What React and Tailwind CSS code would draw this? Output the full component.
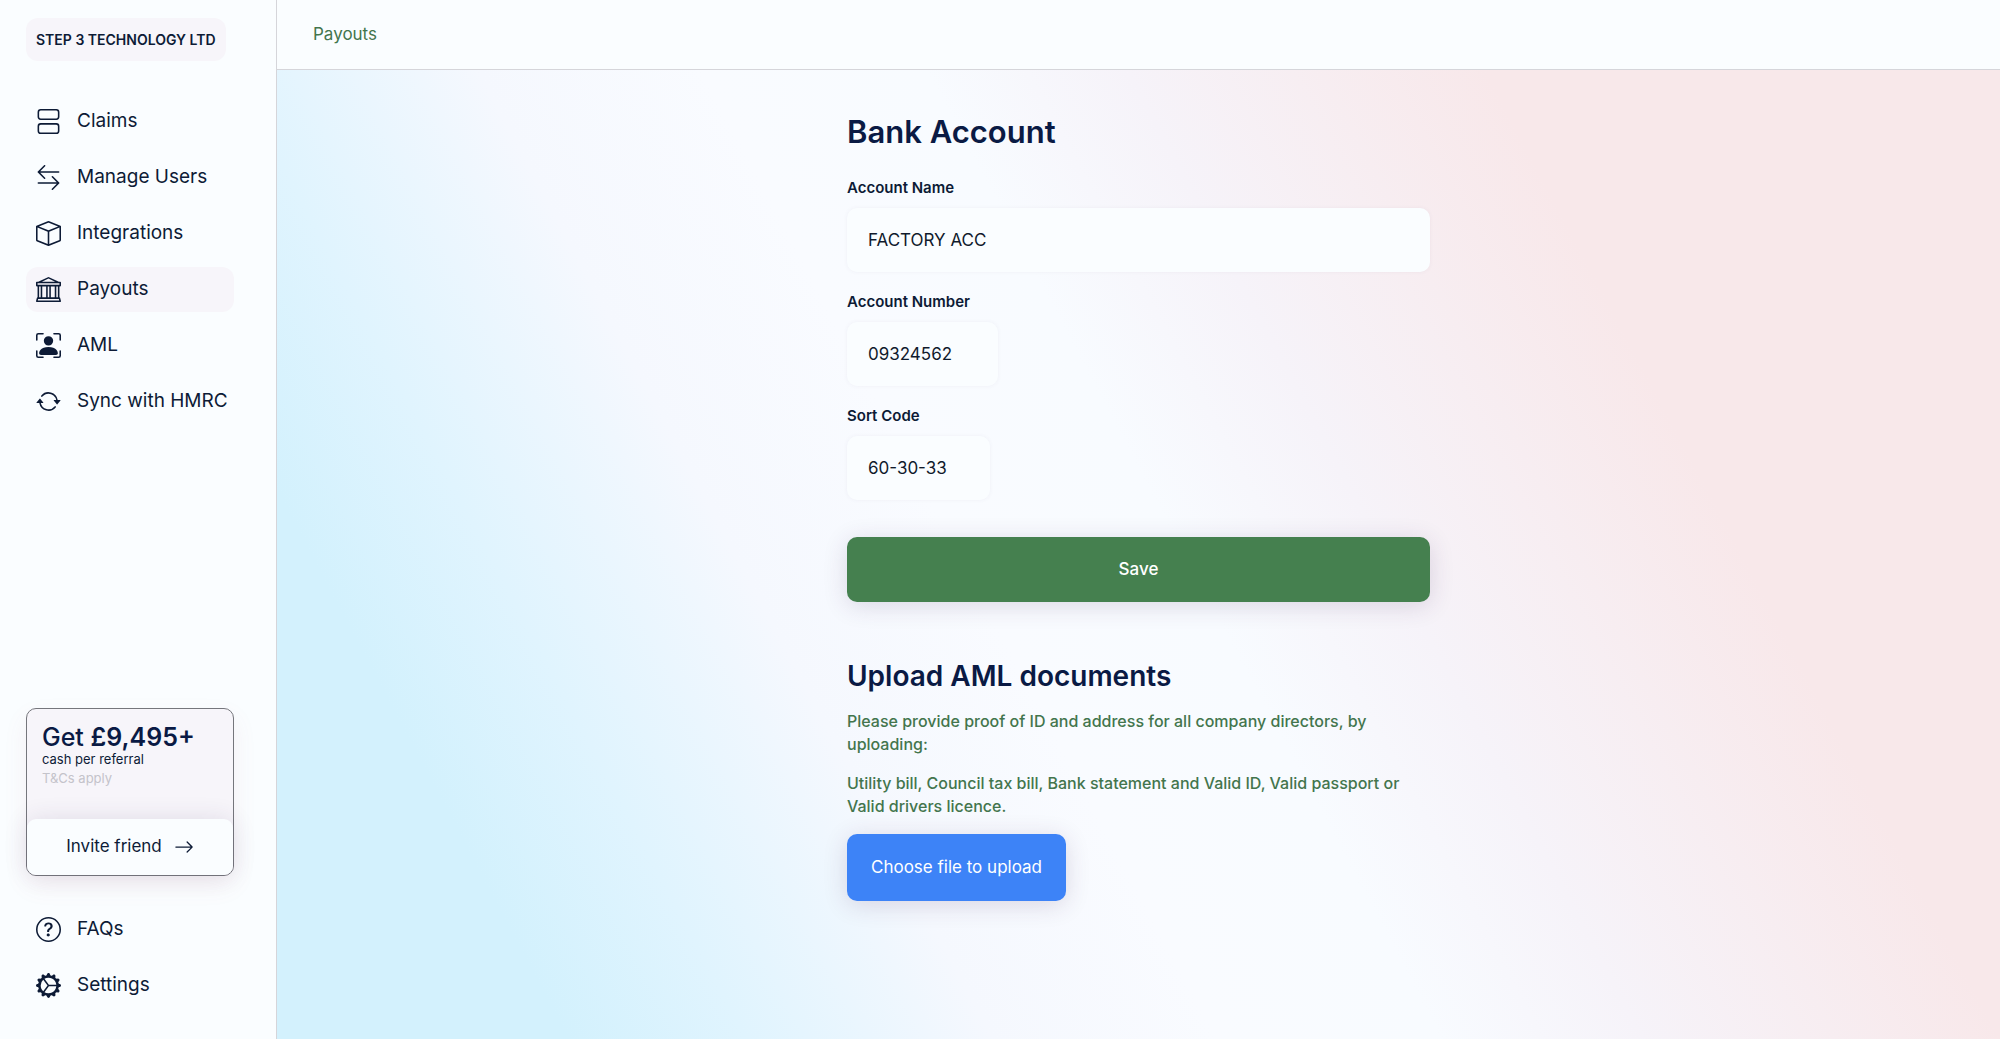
import React, { useState } from "react";
import {
  BsArrowLeftRight,
  BsArrowRepeat,
  BsArrowRight,
  BsBank,
  BsBox,
  BsGearWideConnected,
  BsPersonBoundingBox,
  BsQuestionCircle,
  BsViewStacked,
} from "react-icons/bs";

const mainLinks = [
  { label: "Claims", icon: BsViewStacked },
  { label: "Manage Users", icon: BsArrowLeftRight },
  { label: "Integrations", icon: BsBox },
  { label: "Payouts", icon: BsBank, active: true },
  { label: "AML", icon: BsPersonBoundingBox },
  { label: "Sync with HMRC", icon: BsArrowRepeat },
];

const footerLinks = [
  { label: "FAQs", icon: BsQuestionCircle },
  { label: "Settings", icon: BsGearWideConnected },
];

function NavItem({ label, icon: Icon, active }) {
  return (
    <a
      href="#"
      aria-current={active ? "page" : undefined}
      className={
        active
          ? "flex h-[45px] items-center gap-4 rounded-xl bg-[#f7f5fa] px-[10px] text-[19px] whitespace-nowrap"
          : "flex h-[45px] items-center gap-4 rounded-xl px-[10px] text-[19px] whitespace-nowrap"
      }
    >
      <Icon className="h-[25px] w-[25px] shrink-0" />
      {label}
    </a>
  );
}

function ReferralCard() {
  return (
    <div className="rounded-[10px] border border-[#75767c] bg-[#f7f5fa] shadow-[0_10px_24px_rgba(190,90,120,0.08)]">
      <div className="h-[110px] px-[15px] pt-3">
        <p className="text-[25px] leading-8 font-medium text-[#0a1a44]">
          Get <span className="font-semibold">£9,495+</span>
        </p>
        <p className="text-[13px] leading-3">cash per referral</p>
        <p className="mt-[7px] text-[13px] leading-3 text-[#c4c3ca]">T&amp;Cs apply</p>
      </div>
      <button className="flex h-14 w-full items-center justify-center gap-3 rounded-[9px] bg-[#fafdff] text-[17px] shadow-[0_0_24px_rgba(60,40,90,0.12)]">
        Invite friend
        <BsArrowRight className="h-5 w-5" />
      </button>
    </div>
  );
}

function Sidebar() {
  return (
    <aside className="flex w-[277px] shrink-0 flex-col border-r border-[#d5d5da] bg-[#fafdff] pr-[42px] pb-[31px] pl-[26px]">
      <div className="mt-[18px] flex h-[43px] items-center self-start rounded-xl bg-[#f7f5fa] px-[10px] text-sm font-semibold whitespace-nowrap">
        STEP 3 TECHNOLOGY LTD
      </div>
      <nav className="mt-[38px] flex flex-col gap-[11px]">
        {mainLinks.map((link) => (
          <NavItem key={link.label} {...link} />
        ))}
      </nav>
      <div className="mt-auto">
        <ReferralCard />
      </div>
      <nav className="mt-[31px] flex flex-col gap-[11px]">
        {footerLinks.map((link) => (
          <NavItem key={link.label} {...link} />
        ))}
      </nav>
    </aside>
  );
}

function Field({ id, label, value, onChange, className }) {
  return (
    <div>
      <label htmlFor={id} className="block text-[15px] leading-5 font-semibold">
        {label}
      </label>
      <input
        id={id}
        type="text"
        value={value}
        onChange={(e) => onChange(e.target.value)}
        className={`mt-[10px] block h-16 rounded-[10px] bg-[#fafdff] px-[21px] text-[17px] text-[#101a2c] shadow-[0_0_4px_rgba(90,70,120,0.06)] outline-none ${className}`}
      />
    </div>
  );
}

export default function App() {
  const [name, setName] = useState("FACTORY ACC");
  const [number, setNumber] = useState("09324562");
  const [sortCode, setSortCode] = useState("60-30-33");

  return (
    <div className="flex min-h-screen bg-[#fafdff] font-['Inter',sans-serif] text-[#0d1b36]">
      <Sidebar />
      <div className="flex min-w-0 grow flex-col">
        <header className="flex h-[70px] shrink-0 items-center border-b border-[#d5d5da] px-9 text-[17px] text-[#43754d]">
          Payouts
        </header>
        <main className="grow bg-[linear-gradient(62deg,#d3f1fd_13%,#e0f4fe_21%,#f5f8fe_32%,#f9fbff_42%,#f8fbff_52%,#f6f3f9_61%,#f8e8ea_77%)] px-6 pt-[44px] pb-12">
          <div className="mx-auto w-full max-w-[583px]">
            <form onSubmit={(e) => e.preventDefault()}>
              <h1 className="text-[31px] leading-9 font-semibold text-[#0a1a44]">Bank Account</h1>
              <div className="mt-7 flex flex-col gap-5">
                <Field id="account-name" label="Account Name" value={name} onChange={setName} className="w-full" />
                <Field id="account-number" label="Account Number" value={number} onChange={setNumber} className="w-[151px]" />
                <Field id="sort-code" label="Sort Code" value={sortCode} onChange={setSortCode} className="w-[143px]" />
              </div>
              <button
                type="submit"
                className="mt-[37px] h-[65px] w-full rounded-[10px] bg-[#45804f] text-[17px] font-medium text-white shadow-[0_4px_24px_rgba(70,40,90,0.16)]"
              >
                Save
              </button>
            </form>
            <section className="mt-14">
              <h2 className="text-[28px] leading-9 font-semibold text-[#0a1a44]">Upload AML documents</h2>
              <div className="mt-4 flex flex-col gap-4 text-base leading-[23px] font-medium text-[#43754d]">
                <p>Please provide proof of ID and address for all company directors, by uploading:</p>
                <p>Utility bill, Council tax bill, Bank statement and Valid ID, Valid passport or Valid drivers licence.</p>
              </div>
              <button className="mt-4 h-[67px] min-w-[219px] rounded-[10px] bg-[#3d83f7] px-5 text-[17px] text-white shadow-[0_4px_24px_rgba(70,40,90,0.16)]">
                Choose file to upload
              </button>
            </section>
          </div>
        </main>
      </div>
    </div>
  );
}
